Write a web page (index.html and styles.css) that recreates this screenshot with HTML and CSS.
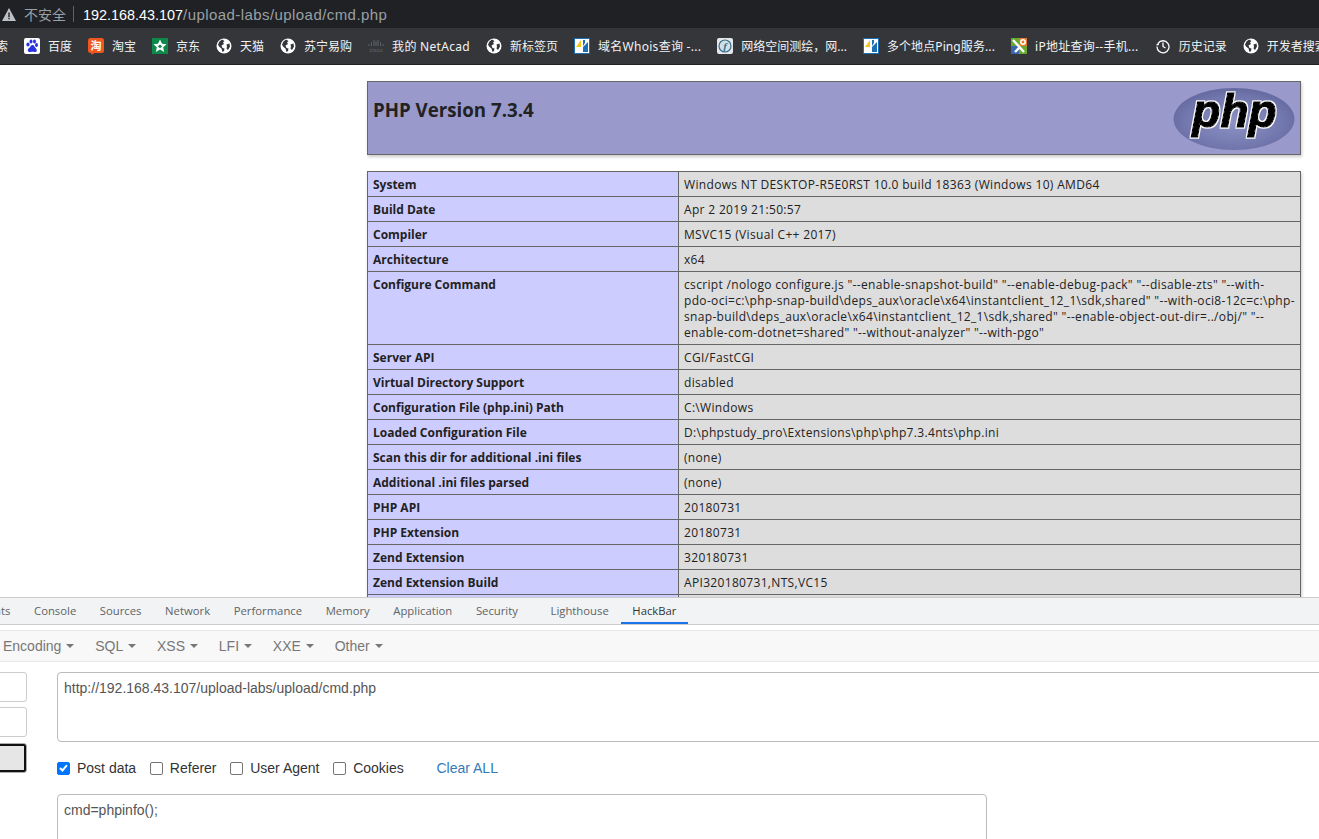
FILE: index.html
```html
<!DOCTYPE html>
<html lang="zh">
<head>
<meta charset="utf-8">
<title>phpinfo()</title>
<link rel="stylesheet" href="styles.css">
</head>
<body>
<svg class="defs" width="0" height="0" aria-hidden="true">
  <defs>
    <symbol id="globe" viewBox="0 0 16 16">
      <circle cx="8" cy="8" r="7.5" fill="#fff"/>
      <path d="M6 1.5 8.5 3 7 4.5 8 6 5.5 7.5 6.5 10 8.5 10.5 8 13 6.5 14 5.5 10.5 3 8.5 2 6.5 3.5 3.5Z" fill="#35363a"/>
      <path d="M10.5 6.5 13.5 5.5 14 8.5 12 12 10.5 10.5 11 8.5Z" fill="#35363a"/>
    </symbol>
    <symbol id="whois" viewBox="0 0 16 16">
      <rect x=".5" y=".5" width="15" height="15" fill="#fff" stroke="#1a6fb5"/>
      <path d="M2 9 7 2V9Z" fill="#f5c518"/>
      <path d="M9 2h2v3L9 8Z" fill="#1a6fb5"/>
      <path d="M9 14V9l5-5v10Z" fill="#1a6fb5"/>
    </symbol>
    <filter id="halo" x="-10%" y="-10%" width="120%" height="120%">
      <feMorphology in="SourceAlpha" operator="dilate" radius="1.4" result="fat"/>
      <feFlood flood-color="#fff"/>
      <feComposite in2="fat" operator="in" result="edge"/>
      <feMerge><feMergeNode in="edge"/><feMergeNode in="SourceGraphic"/></feMerge>
    </filter>
  </defs>
</svg>

<header class="address">
  <svg class="warn" width="14" height="13" viewBox="0 0 14 13"><path d="M7 0 14 13H0Z" fill="#bdc1c6"/><path d="M6.3 4.5h1.4v4.4H6.3ZM6.3 9.8h1.4v1.4H6.3Z" fill="#202124"/></svg>
  <span class="insecure">不安全</span>
  <span class="divider"></span>
  <span class="url"><b>192.168.43.107</b><span class="path">/upload-labs/upload/cmd.php</span></span>
</header>

<nav class="bookmarks">
  <span class="mark first">搜索</span>
  <span class="mark"><svg width="16" height="16" viewBox="0 0 16 16"><rect width="16" height="16" rx="2" fill="#fff"/><g fill="#2932e1"><ellipse cx="4" cy="6.5" rx="1.6" ry="2"/><ellipse cx="7" cy="3.5" rx="1.5" ry="2"/><ellipse cx="10.5" cy="3.5" rx="1.5" ry="2"/><ellipse cx="12.5" cy="7" rx="1.5" ry="2"/><path d="M8.5 7C6.5 7 6.500 9.500 4.500 10.500 3 12 4 14.500 6.500 14 8 13.700 9 13.700 10.500 14 13 14.500 13.500 12 12 10.500 10.500 9.500 10.500 7 8.500 7Z"/></g></svg>百度</span>
  <span class="mark"><svg width="16" height="17" viewBox="0 0 16 17"><rect width="16" height="15" rx="2.500" fill="#f0571f"/><path d="M3 14.500 3.500 17 7 14.500Z" fill="#f0571f"/><text x="8" y="12" class="tao">淘</text></svg>淘宝</span>
  <span class="mark"><svg width="16" height="16" viewBox="0 0 16 16"><rect width="16" height="16" fill="#0d8a4a"/><path d="M8 1.500 10 5.800 14.500 6.300 11.200 9.300 12.100 14 8 11.600 3.900 14 4.800 9.300 1.500 6.300 6 5.800Z" fill="#fff"/><circle cx="8" cy="8.300" r="1.600" fill="#0d8a4a"/></svg>京东</span>
  <span class="mark"><svg width="16" height="16"><use href="#globe"/></svg>天猫</span>
  <span class="mark"><svg width="16" height="16"><use href="#globe"/></svg>苏宁易购</span>
  <span class="mark"><svg width="16" height="16" viewBox="0 0 16 16"><path d="M1 6v2M3.500 4.500v3.500M6 2v6M8 3.500v4.500M10 2v6M12.500 4.500v3.500M15 6v2" stroke="#5f6368" stroke-width="1"/><text x="8" y="14" class="cisco">cisco</text></svg><span class="lat">我的 NetAcad</span></span>
  <span class="mark"><svg width="16" height="16"><use href="#globe"/></svg>新标签页</span>
  <span class="mark"><svg width="16" height="16"><use href="#whois"/></svg><span class="lat wide">域名Whois查询 -...</span></span>
  <span class="mark"><svg width="16" height="16" viewBox="0 0 16 16"><rect width="16" height="16" rx="2" fill="#e4e8ea"/><circle cx="8" cy="8" r="6" fill="#cfe0e8" stroke="#3d6f88" stroke-width="1.200"/><text x="8" y="12" class="fofa">f</text></svg>网络空间测绘，网...</span>
  <span class="mark"><svg width="16" height="16"><use href="#whois"/></svg><span class="lat slight">多个地点Ping服务...</span></span>
  <span class="mark"><svg width="16" height="16" viewBox="0 0 16 16"><rect width="16" height="16" fill="#6aa92f"/><rect x="8" width="8" height="8" fill="#e8792b"/><rect y="8" width="8" height="8" fill="#3a66b0"/><path d="M2 2 13 14M9 9 4 14" stroke="#fff" stroke-width="2.400"/><circle cx="12" cy="4" r="2.200" fill="none" stroke="#fff" stroke-width="1.500"/></svg><span class="lat">iP地址查询--手机...</span></span>
  <span class="mark"><svg width="16" height="16" viewBox="0 0 16 16" fill="none" stroke="#fff" stroke-width="1.300"><path d="M3.100 5.300A6 6 0 1 1 2 8.500"/><path d="M8 4.500v4l2.500 1.500"/><path d="M.8 7.200H3.800V4.200" stroke="none" fill="#fff"/></svg>历史记录</span>
  <span class="mark"><svg width="16" height="16"><use href="#globe"/></svg>开发者搜索</span>
</nav>

<main class="viewport">
  <div class="phpinfo">
    <table class="head">
      <tr><td>
        <svg class="logo" width="122" height="64" viewBox="0 0 122 64">
          <defs>
            <radialGradient id="lg" cx=".5" cy=".55" r=".6">
              <stop offset="0" stop-color="#8e93c4"/><stop offset=".7" stop-color="#7176ad"/><stop offset="1" stop-color="#5f649b"/>
            </radialGradient>
          </defs>
          <ellipse cx="61" cy="32" rx="60.500" ry="31" fill="url(#lg)"/>
          <text x="61.500" y="40" class="logotext">php</text>
        </svg>
        <h1>PHP Version 7.3.4</h1>
      </td></tr>
    </table>
    <table class="info">
      <tr><td class="e">System</td><td class="v">Windows NT DESKTOP-R5E0RST 10.0 build 18363 (Windows 10) AMD64</td></tr>
      <tr><td class="e">Build Date</td><td class="v">Apr 2 2019 21:50:57</td></tr>
      <tr><td class="e">Compiler</td><td class="v">MSVC15 (Visual C++ 2017)</td></tr>
      <tr><td class="e">Architecture</td><td class="v">x64</td></tr>
      <tr><td class="e">Configure Command</td><td class="v">cscript /nologo configure.js &quot;--enable-snapshot-build&quot; &quot;--enable-debug-pack&quot; &quot;--disable-zts&quot; &quot;--with-<br>pdo-oci=c:\php-snap-build\deps_aux\oracle\x64\instantclient_12_1\sdk,shared&quot; &quot;--with-oci8-12c=c:\php-<br>snap-build\deps_aux\oracle\x64\instantclient_12_1\sdk,shared&quot; &quot;--enable-object-out-dir=../obj/&quot; &quot;--<br>enable-com-dotnet=shared&quot; &quot;--without-analyzer&quot; &quot;--with-pgo&quot;</td></tr>
      <tr><td class="e">Server API</td><td class="v">CGI/FastCGI</td></tr>
      <tr><td class="e">Virtual Directory Support</td><td class="v">disabled</td></tr>
      <tr><td class="e">Configuration File (php.ini) Path</td><td class="v">C:\Windows</td></tr>
      <tr><td class="e">Loaded Configuration File</td><td class="v">D:\phpstudy_pro\Extensions\php\php7.3.4nts\php.ini</td></tr>
      <tr><td class="e">Scan this dir for additional .ini files</td><td class="v">(none)</td></tr>
      <tr><td class="e">Additional .ini files parsed</td><td class="v">(none)</td></tr>
      <tr><td class="e">PHP API</td><td class="v">20180731</td></tr>
      <tr><td class="e">PHP Extension</td><td class="v">20180731</td></tr>
      <tr><td class="e">Zend Extension</td><td class="v">320180731</td></tr>
      <tr><td class="e">Zend Extension Build</td><td class="v">API320180731,NTS,VC15</td></tr>
      <tr><td class="e">&nbsp;</td><td class="v">&nbsp;</td></tr>
    </table>
  </div>
</main>

<section class="devtools">
  <div class="tabs">
    <span class="tab">Elements</span>
    <span class="tab">Console</span>
    <span class="tab">Sources</span>
    <span class="tab">Network</span>
    <span class="tab">Performance</span>
    <span class="tab">Memory</span>
    <span class="tab">Application</span>
    <span class="tab">Security</span>
    <span class="tab far">Lighthouse</span>
    <span class="tab active">HackBar</span>
  </div>
  <div class="menu">
    <span class="item">Encoding<i class="caret"></i></span>
    <span class="item">SQL<i class="caret"></i></span>
    <span class="item">XSS<i class="caret"></i></span>
    <span class="item">LFI<i class="caret"></i></span>
    <span class="item">XXE<i class="caret"></i></span>
    <span class="item">Other<i class="caret"></i></span>
  </div>
  <div class="hackbar">
    <div class="buttons">
      <span class="btn"></span>
      <span class="btn"></span>
      <span class="btn focus"></span>
    </div>
    <div class="fields">
      <div class="field url-field">http://192.168.43.107/upload-labs/upload/cmd.php</div>
      <div class="checks">
        <label class="check"><span class="box on"><svg width="9" height="8" viewBox="0 0 9 8"><path d="M1 4 3.500 6.500 8 1.200" fill="none" stroke="#fff" stroke-width="2"/></svg></span>Post data</label>
        <label class="check"><span class="box"></span>Referer</label>
        <label class="check"><span class="box"></span>User Agent</label>
        <label class="check"><span class="box"></span>Cookies</label>
        <span class="clear">Clear ALL</span>
      </div>
      <div class="field post-field">cmd=phpinfo();</div>
    </div>
  </div>
</section>
</body>
</html>
```
FILE: styles.css
```css
* { box-sizing: border-box; }
html, body { margin: 0; height: 839px; overflow: hidden; background: #fff; }
body { display: flex; flex-direction: column; font-family: "Liberation Sans", Arial, sans-serif; }
.defs { position: absolute; }

.address { flex: none; height: 28px; background: #202124; display: flex; align-items: center; padding-left: 2px; color: #9aa0a6; font-size: 14.4px; }
.warn { flex: none; }
.insecure { margin-left: 8px; font-family: "Noto Sans CJK SC", sans-serif; font-size: 14px; }
.divider { width: 1px; height: 16px; background: #5f6368; margin: 0 9px 0 7px; }
.url b { font-weight: 400; color: #fff; }
.path { font-size: 15px; letter-spacing: .43px; }

.bookmarks { flex: none; height: 37px; background: #35363a; border-bottom: 1px solid #202124; display: flex; align-items: center; gap: 16px; overflow: hidden; color: #f1f3f4; font: 12px "Noto Sans", "Noto Sans CJK SC", sans-serif; white-space: nowrap; }
.mark { flex: none; display: flex; align-items: center; gap: 8px; }
.mark svg { flex: none; }
.first { margin-left: -16px; }
.lat { letter-spacing: .3px; }
.wide { letter-spacing: .28px; }
.slight { letter-spacing: .1px; }
.tao { font: bold 11px "Noto Sans CJK SC", sans-serif; fill: #fff; text-anchor: middle; }
.cisco { font: 6px "Liberation Sans", sans-serif; fill: #5f6368; text-anchor: middle; }
.fofa { font: italic bold 11px "Liberation Serif", serif; fill: #3d6f88; text-anchor: middle; }

.viewport { flex: none; height: 532px; overflow: hidden; padding: 16px 18px 0 367px; color: #222; font: 12px/16px "Open Sans", sans-serif; }
.phpinfo { width: 934px; }
table { border-collapse: collapse; width: 934px; table-layout: fixed; box-shadow: 1px 2px 3px #ccc; }
td { border: 1px solid #666; vertical-align: baseline; padding: 5px 5px 3px; }
.head { margin-bottom: 16px; }
.head td { background: #99c; height: 73px; vertical-align: top; padding: 0 5px; }
.head h1 { margin: 0; padding-top: 14px; font: bold 18.7px/27px "Open Sans", sans-serif; }
.logo { float: right; margin: 5px 0 0 0; }
.logotext { font: italic bold 46px "Liberation Sans", sans-serif; fill: #000; stroke: #000; stroke-width: 1.300px; text-anchor: middle; filter: url(#halo); }
.e { background: #ccf; font-weight: 700; width: 311px; }
.v { background: #ddd; letter-spacing: .33px; }

.devtools { flex: 1; min-height: 0; border-top: 1px solid #ccc; background: #fff; overflow: hidden; }
.tabs { height: 27px; background: #f1f3f4; border-bottom: 1px solid #cbcdd1; display: flex; color: #5f6368; font: 11.3px/26px "Open Sans", sans-serif; margin-left: -50px; white-space: nowrap; }
.tab { padding: 0 11.800px; }
.far { margin-left: 9px; }
.active { color: #333; box-shadow: inset 0 -2px #1a73e8; }

.menu { margin: 5px 0 0; height: 32px; background: #f8f8f8; border: solid #e7e7e7; border-width: 1px 0; display: flex; padding-left: 3px; gap: 20.800px; align-items: center; color: #777; font-size: 14px; }
.item { display: inline-flex; align-items: center; gap: 5px; }
.caret { width: 0; height: 0; border: 4px solid transparent; border-top-color: #777; border-bottom: 0; }

.hackbar { display: flex; padding-top: 10px; gap: 30px; margin-left: -130px; color: #555; font-size: 14px; }
.buttons { flex: none; width: 157px; display: flex; flex-direction: column; gap: 5px; }
.btn { height: 30px; background: #fff; border: 1px solid #ccc; border-radius: 3px; }
.focus { margin-top: 1px; background: #e6e6e6; border: 1px solid #adadad; outline: 2px solid #111; outline-offset: -3px; }
.fields { flex: none; width: 1400px; }
.field { border: 1px solid #bbb; border-radius: 4px; padding: 5px 6px; line-height: 20px; }
.url-field { height: 70px; }
.checks { display: flex; align-items: center; height: 52px; color: #333; }
.check { display: inline-flex; align-items: center; margin-right: 13.700px; gap: 7px; }
.box { width: 13px; height: 13px; border: 1px solid #767676; border-radius: 2px; background: #fff; display: flex; align-items: center; justify-content: center; }
.box.on { background: #0075ff; border-color: #0075ff; }
.clear { margin-left: 19px; color: #337ab7; }
.post-field { width: 930px; height: 90px; }
```
